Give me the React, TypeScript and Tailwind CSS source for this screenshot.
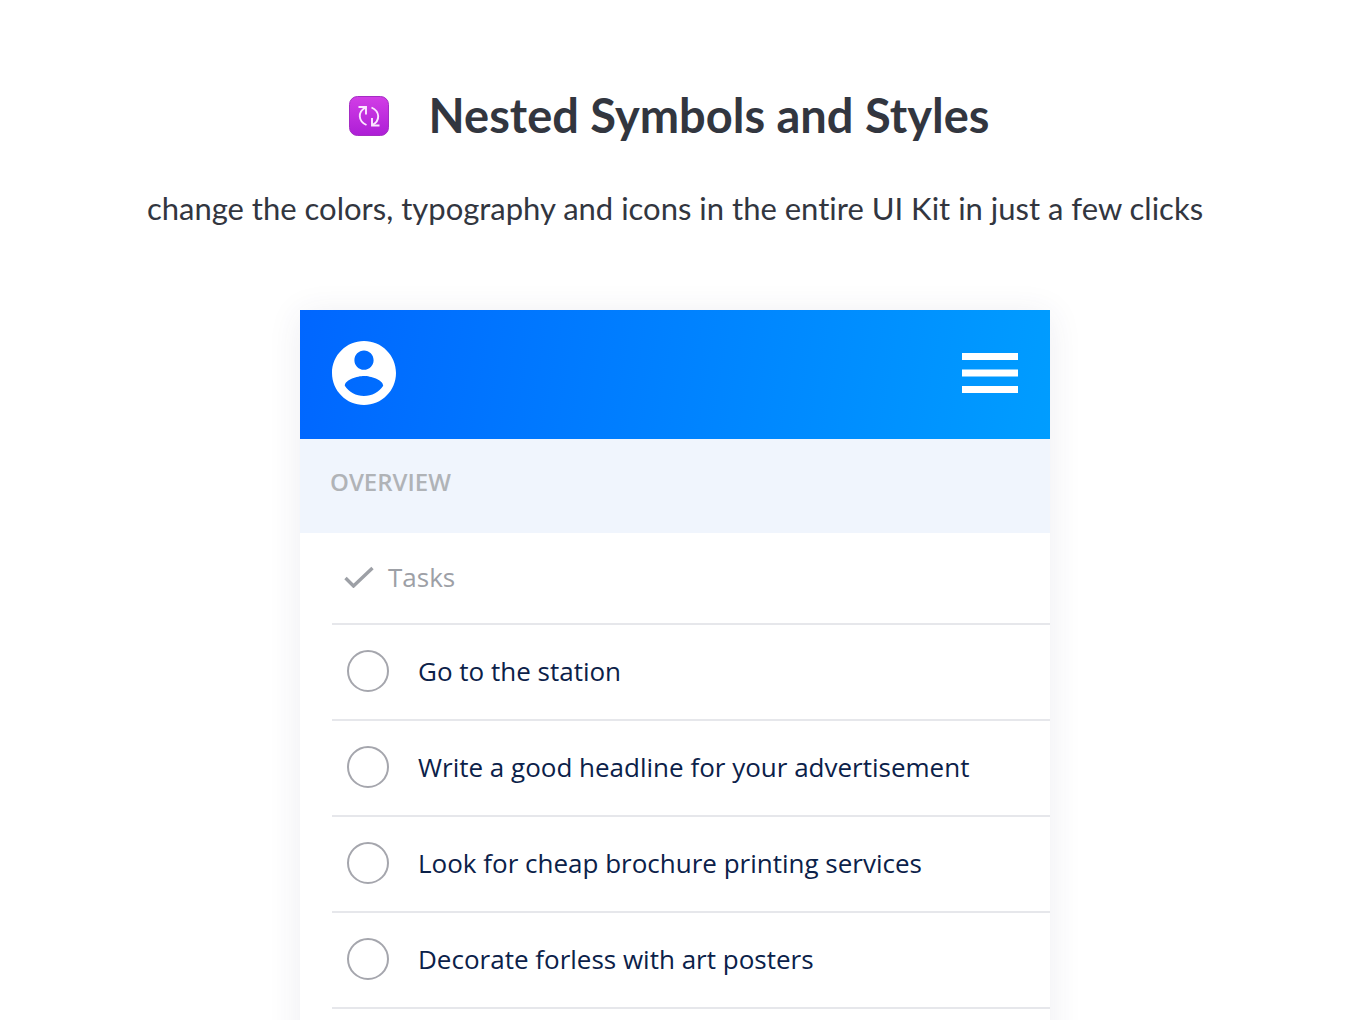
const tasks = [
  "Go to the station",
  "Write a good headline for your advertisement",
  "Look for cheap brochure printing services",
  "Decorate forless with art posters",
];

function SyncIcon() {
  return (
    <svg viewBox="0 0 40 40" className="h-10 w-10" aria-hidden="true">
      <defs>
        <linearGradient id="sync-bg" x1="0" y1="0" x2="0" y2="1">
          <stop offset="0" stopColor="#d23ee6" />
          <stop offset="1" stopColor="#ad1ed6" />
        </linearGradient>
      </defs>
      <rect x="0.5" y="0.5" width="39" height="39" rx="8" fill="url(#sync-bg)" stroke="#a52cc4" />
      <g fill="none" stroke="#fbe6ff" strokeWidth="1.9">
        <path d="M9.500 11h7.500v7.500" />
        <path d="M16.500 11.500C8.500 16 9 25 17.500 29" />
        <path d="M30.500 29.500H23V22" />
        <path d="M23.500 29C31.500 24.500 31 15.500 22.500 11.500" />
      </g>
    </svg>
  );
}

function AccountIcon() {
  return (
    <svg viewBox="2 2 20 20" className="h-16 w-16" fill="currentColor" aria-hidden="true">
      <path d="M12 2C6.480 2 2 6.480 2 12s4.480 10 10 10 10-4.480 10-10S17.520 2 12 2zm0 3c1.660 0 3 1.340 3 3s-1.340 3-3 3-3-1.340-3-3 1.340-3 3-3zm0 14.200c-2.500 0-4.710-1.280-6-3.220.03-1.990 4-3.080 6-3.080 1.990 0 5.970 1.090 6 3.080-1.290 1.940-3.500 3.220-6 3.220z" />
    </svg>
  );
}

function MenuIcon() {
  return (
    <svg viewBox="0 0 56 40" className="h-10 w-14" fill="currentColor" aria-hidden="true">
      <path d="M0 0h56v7H0zM0 16.500h56v7H0zM0 33h56v7H0z" />
    </svg>
  );
}

function CheckIcon() {
  return (
    <svg viewBox="0 0 30 22" className="h-[22px] w-[30px]" aria-hidden="true">
      <path d="M1.500 12l8 8L28.500 2" fill="none" stroke="#9da0a6" strokeWidth="3.400" />
    </svg>
  );
}

export default function App() {
  return (
    <main className="h-screen overflow-hidden bg-white px-6 pt-[84px] text-[#32363f]">
      <header className="text-center font-['Lato',sans-serif] [font-variant-ligatures:none]">
        <div className="flex items-center justify-center gap-10 pr-3">
          <SyncIcon />
          <h1 className="pb-[2px] text-[47px] leading-[62px] font-bold">Nested Symbols and Styles</h1>
        </div>
        <p className="mt-[38px] text-[31px] leading-[44px]">
          change the colors, typography and icons in the entire UI Kit in just a few clicks
        </p>
      </header>

      <section className="mx-auto mt-20 max-w-[750px] bg-white pb-40 font-['Open_Sans',sans-serif] shadow-[0_4px_32px_rgba(60,50,100,0.09)]">
        <nav className="flex h-[129px] items-center justify-between bg-linear-[100deg] from-[#0066ff] to-[#009dff] px-8 pb-[3px] text-white">
          <button type="button" aria-label="Account">
            <AccountIcon />
          </button>
          <button type="button" aria-label="Menu">
            <MenuIcon />
          </button>
        </nav>

        <h2 className="flex h-[94px] items-center bg-[#f0f5fd] px-[30px] pb-2 text-[24px] leading-8 font-semibold text-[#b0b3b7]">
          OVERVIEW
        </h2>

        <div className="pl-8">
          <h3 className="flex h-[92px] items-center gap-[14px] border-b-2 border-[#e6e7eb] pb-[2px] pl-3 text-[26px] text-[#9da0a6]">
            <CheckIcon />
            Tasks
          </h3>
          <ul>
            {tasks.map((task) => (
              <li key={task} className="border-b-2 border-[#e6e7eb]">
                <label className="flex h-[94px] items-center gap-[29px] pb-[2px] pl-[15px] text-[26px] text-[#0b2149]">
                  <input
                    type="checkbox"
                    className="h-[42px] w-[42px] shrink-0 appearance-none rounded-full border-2 border-[#a5a6ad] checked:bg-[#0066ff]"
                  />
                  {task}
                </label>
              </li>
            ))}
          </ul>
        </div>
      </section>
    </main>
  );
}
